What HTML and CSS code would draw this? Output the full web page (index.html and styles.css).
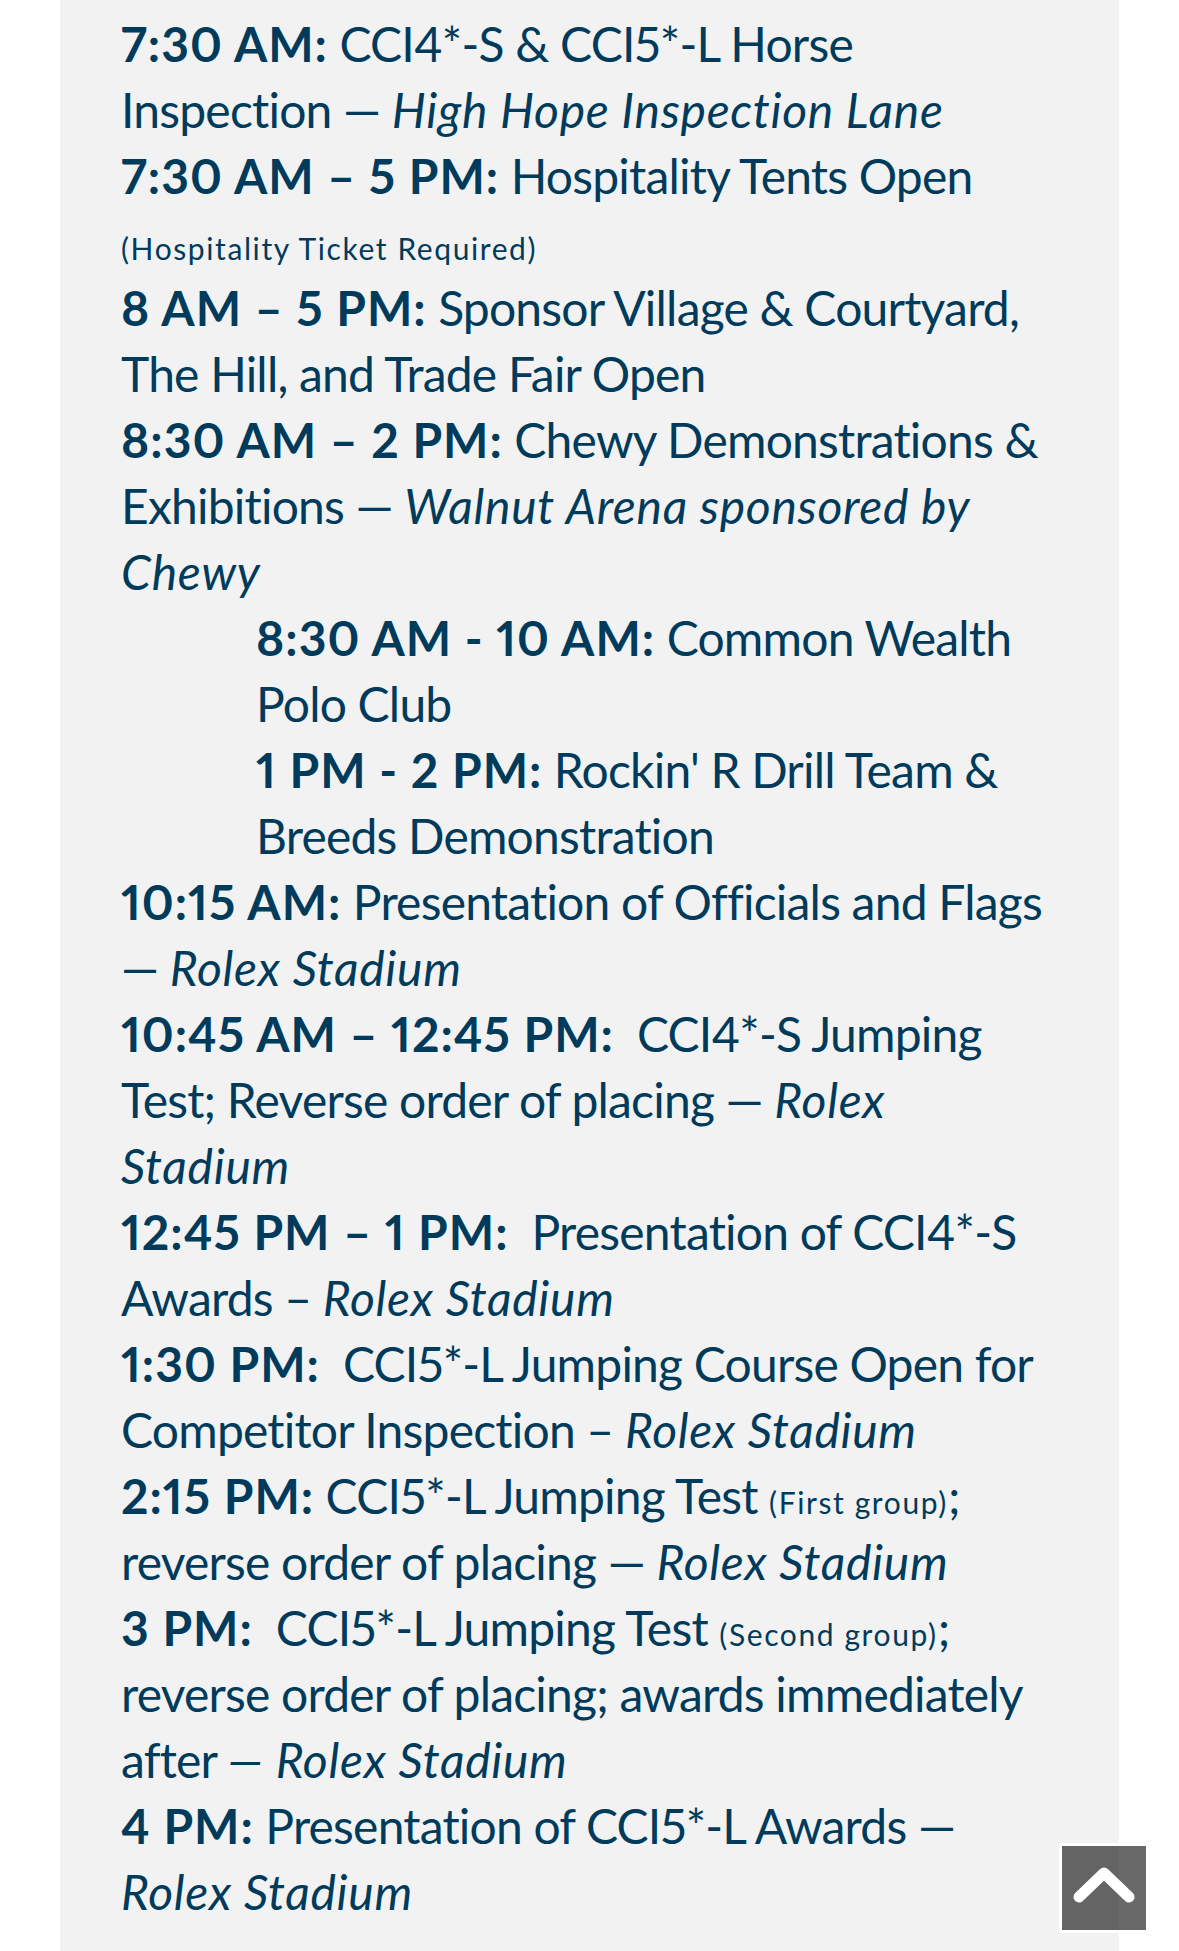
FILE: index.html
```html
<!DOCTYPE html>
<html lang="en">
<head>
<meta charset="utf-8">
<title>Saturday Schedule</title>
<link rel="stylesheet" href="styles.css">
</head>
<body>
<main class="card">
  <div class="schedule">
    <p class="item"><strong>7:30 AM:</strong> CCI4*-S &amp; CCI5*-L Horse Inspection — <em>High Hope Inspection Lane</em></p>
    <p class="item"><strong>7:30 AM – 5 PM:</strong> Hospitality Tents Open<br><small>(Hospitality Ticket Required)</small></p>
    <p class="item"><strong>8 AM – 5 PM:</strong> Sponsor Village &amp; Courtyard, The Hill, and Trade Fair Open</p>
    <p class="item"><strong>8:30 AM – 2 PM:</strong> Chewy Demonstrations &amp; Exhibitions — <em>Walnut Arena sponsored by Chewy</em></p>
    <p class="item sub"><strong>8:30 AM - 10 AM:</strong> Common Wealth Polo Club</p>
    <p class="item sub"><strong>1 PM - 2 PM:</strong> Rockin' R Drill Team &amp; Breeds Demonstration</p>
    <p class="item"><strong>10:15 AM:</strong> Presentation of Officials and Flags — <em>Rolex Stadium</em></p>
    <p class="item"><strong>10:45 AM – 12:45 PM:</strong>&nbsp; CCI4*-S Jumping Test; Reverse order of placing — <em>Rolex Stadium</em></p>
    <p class="item"><strong>12:45 PM – 1 PM:</strong>&nbsp; Presentation of CCI4*-S Awards – <em>Rolex Stadium</em></p>
    <p class="item"><strong>1:30 PM:</strong>&nbsp; CCI5*-L Jumping Course Open for Competitor Inspection – <em>Rolex Stadium</em></p>
    <p class="item"><strong>2:15 PM:</strong> CCI5*-L Jumping Test <small>(First group)</small>; reverse order of placing — <em>Rolex Stadium</em></p>
    <p class="item"><strong>3 PM:</strong>&nbsp; CCI5*-L Jumping Test <small>(Second group)</small>; reverse order of placing; awards immediately after <em>— Rolex Stadium</em></p>
    <p class="item"><strong>4 PM:</strong> Presentation of CCI5*-L Awards — <em>Rolex Stadium</em></p>
  </div>
</main>
<a class="to-top" href="#" aria-label="Back to top">
  <svg class="to-top-icon" width="84" height="84" viewBox="0 0 84 84" aria-hidden="true">
    <polyline points="17,51 42,27 67,51" fill="none" stroke="#ffffff" stroke-width="11" stroke-linecap="round" stroke-linejoin="round"/>
  </svg>
</a>
</body>
</html>
```
FILE: styles.css
```css
html, body {
  margin: 0;
  padding: 0;
  background: #ffffff;
}

body {
  font-family: "Lato", "Liberation Sans", sans-serif;
  color: #013b5c;
  height: 1951px;
  overflow: hidden;
}

.card {
  margin: 0 60px;
  background: #f2f2f2;
  min-height: 1951px;
  padding: 11px 60px 0 61px;
  box-sizing: border-box;
}

.schedule {
  font-size: 48px;
  line-height: 66px;
  font-variant-numeric: proportional-nums;
}

.item {
  margin: 0;
  letter-spacing: -0.8px;
}

.item.sub {
  padding-left: 135px;
}

.item strong {
  font-weight: 700;
  letter-spacing: 1px;
}

.item em {
  font-style: italic;
  letter-spacing: 0.7px;
}

.item small {
  font-size: 30px;
  letter-spacing: 1.6px;
  line-height: 0;
}

.to-top {
  position: fixed;
  left: 1059px;
  top: 1843px;
  width: 84px;
  height: 84px;
  border: 3px solid #ffffff;
  background: rgba(0, 0, 0, 0.59);
  display: flex;
  align-items: center;
  justify-content: center;
}

.to-top-icon {
  display: block;
}
```
